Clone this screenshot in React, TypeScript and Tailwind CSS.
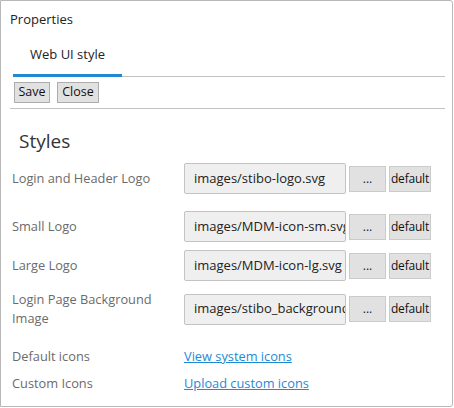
import { useState } from 'react';

const font = { fontFamily: '"Open Sans", "Noto Sans", sans-serif' };

type Row = { label: string; value: string; cls: string };

const rows: Row[] = [
  { label: 'Login and Header Logo', value: 'images/stibo-logo.svg', cls: 'mt-[9px]' },
  { label: 'Small Logo', value: 'images/MDM-icon-sm.svg', cls: 'mt-[17px]' },
  { label: 'Large Logo', value: 'images/MDM-icon-lg.svg', cls: 'mt-[8px]' },
  { label: 'Login Page Background Image', value: 'images/stibo_background.jpg', cls: 'mt-[9px]' },
];

const FileRow = ({ row }: { row: Row }) => (
  <div className={`flex items-center ${row.cls}`}>
    <div className="w-[183px] shrink-0 pl-[11px] pr-[20px] text-[12.8px] leading-[19px] text-[#6b6b6b]">{row.label}</div>
    <div className="w-[162px] shrink-0 h-[31px] flex items-center pl-[9px] pr-[2px] overflow-hidden whitespace-nowrap bg-[#efefef] border border-[#c3c3c3] rounded-[2px] text-[13px] text-[#222]">
      {row.value}
    </div>
    <button className="shrink-0 ml-[3px] w-[37px] h-[26px] flex items-center justify-center bg-[#e1e1e1] border border-[#cbcbcb] text-[12px] text-[#222]">
      ...
    </button>
    <button className="shrink-0 ml-[3px] w-[42px] h-[26px] flex items-center justify-center overflow-hidden bg-[#e1e1e1] border border-[#cbcbcb] text-[12px] text-[#111] tracking-[-0.2px]">
      default
    </button>
  </div>
);

export default function App() {
  const [tab] = useState('web');
  return (
    <div className="w-[454px] h-[408px] bg-white" style={font}>
      <div className="w-[453px] h-[407px] border border-[#b8b8b8] rounded-r-[3px] flex flex-col">
        <div className="pl-[9px] pt-[9px] text-[13px] leading-[18px] text-[#222]">Properties</div>

        <div className="mt-[8px] ml-[12px] mr-[7px] flex border-b border-[#c2c2c2]">
          {tab === 'web' && (
            <div className="w-[109px] h-[41px] flex items-center pl-[17px] border-b-[3px] border-[#1f8ad3] -mb-[1px] text-[13px] text-[#222]">
              Web UI style
            </div>
          )}
        </div>

        <div className="flex gap-[7px] ml-[13px] mt-[5px]">
          <button className="w-[36px] h-[21px] flex items-center justify-center bg-[#e1e1e1] border border-[#adadad] text-[12.5px] text-[#111]">
            Save
          </button>
          <button className="w-[42px] h-[21px] flex items-center justify-center bg-[#e1e1e1] border border-[#adadad] text-[12.5px] text-[#111]">
            Close
          </button>
        </div>

        <div className="mt-[5px] ml-[9px] mr-[7px] border-b border-[#c2c2c2]" />

        <div className="pl-[18px] mt-[19px] text-[19px] leading-[26px] text-[#333]">Styles</div>

        {rows.map((r) => (
          <FileRow key={r.label} row={r} />
        ))}

        <div className="flex items-center mt-[19px] text-[12.8px] leading-[19px]">
          <div className="w-[183px] shrink-0 pl-[11px] text-[#6b6b6b]">Default icons</div>
          <a href="#" className="text-[#1d8ad6] underline">View system icons</a>
        </div>
        <div className="flex items-center mt-[8px] text-[12.8px] leading-[19px]">
          <div className="w-[183px] shrink-0 pl-[11px] text-[#6b6b6b]">Custom Icons</div>
          <a href="#" className="text-[#1d8ad6] underline">Upload custom icons</a>
        </div>
      </div>
    </div>
  );
}
